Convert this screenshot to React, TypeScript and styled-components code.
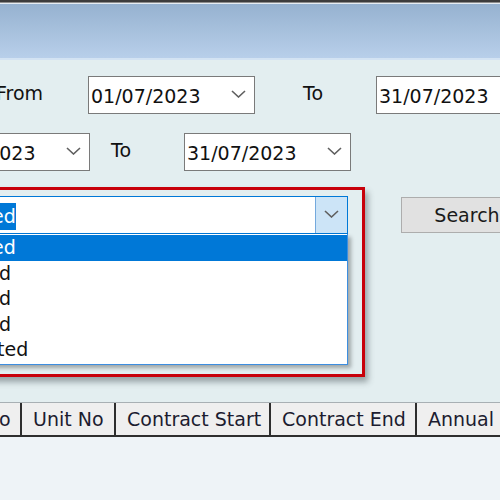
import { FC } from 'react';
import styled, { createGlobalStyle } from 'styled-components';

const GlobalStyle = createGlobalStyle`
  html, body {
    margin: 0;
    padding: 0;
    width: 500px;
    height: 500px;
    overflow: hidden;
    background: #e3eef0;
  }
  body {
    font-family: "DejaVu Sans", "Liberation Sans", sans-serif;
    font-size: 19px;
    color: #111;
  }
`;

const Window = styled.div`
  width: 500px;
  height: 500px;
  overflow: hidden;
  display: flex;
  flex-direction: column;
`;

const TitleBar = styled.div`
  height: 60px;
  flex: none;
  background: linear-gradient(
    #3c3c3c 0 2px,
    #8e8e8e 2px 3px,
    #e6edf3 3px 4px,
    #96b2d0 4px,
    #b8cfea 58px,
    #d3e3f3 58px 60px
  );
`;

const Form = styled.div`
  padding-top: 16px;
  display: flex;
  flex-direction: column;
`;

const Row = styled.div<{ $top?: number }>`
  display: flex;
  align-items: flex-start;
  height: 38px;
  margin-top: ${p => p.$top ?? 0}px;
  white-space: nowrap;
`;

const Label = styled.div<{ $width: number; $gap?: number }>`
  width: ${p => p.$width}px;
  margin-left: ${p => p.$gap ?? 0}px;
  padding-top: 6px;
  line-height: 22px;
  flex: none;
`;

const Combo = styled.div<{ $width: number; $left?: number; $focused?: boolean }>`
  width: ${p => p.$width}px;
  height: 38px;
  margin-left: ${p => p.$left ?? 0}px;
  box-sizing: border-box;
  border: 1px solid ${p => (p.$focused ? '#0078d7' : '#7a7a7a')};
  background: #fff;
  display: flex;
  align-items: center;
  flex: none;
`;

const ComboText = styled.div<{ $indent?: number }>`
  flex: 1;
  padding-left: ${p => p.$indent ?? 2}px;
  padding-top: 2px;
  line-height: 22px;
  overflow: hidden;
`;

const Selected = styled.span`
  background: #0078d7;
  color: #fff;
  display: inline-block;
  line-height: 27px;
`;

const ChevronBox = styled.div<{ $active?: boolean }>`
  width: 32px;
  height: 100%;
  display: flex;
  align-items: center;
  justify-content: center;
  box-sizing: border-box;
  background: ${p => (p.$active ? '#cce4f7' : 'transparent')};
  border-left: ${p => (p.$active ? '1px solid #74a9dd' : 'none')};
  padding-bottom: 3px;
`;

const Chevron: FC = () => (
  <svg width="15" height="8" viewBox="0 0 15 8">
    <polyline points="1,1 7.5,7 14,1" fill="none" stroke="#5f5f5f" strokeWidth="1.6" />
  </svg>
);

const SearchRow = styled.div`
  display: flex;
  align-items: flex-start;
  margin-top: 16px;
`;

const Highlight = styled.div`
  margin-left: -30px;
  width: 395px;
  height: 190px;
  box-sizing: border-box;
  border: 3px solid #c8000a;
  padding: 6px 14px 0 0;
  box-shadow: 3px 5px 6px rgba(60, 70, 75, 0.45);
  flex: none;
`;

const List = styled.div`
  height: 131px;
  box-sizing: border-box;
  border: 1px solid #3d8ee0;
  border-top: none;
  padding-top: 1px;
  background: #fff;
  box-shadow: 3px 3px 4px rgba(0, 0, 0, 0.3);
`;

const Item = styled.div<{ $indent: number; $active?: boolean }>`
  height: 25.6px;
  line-height: 25.6px;
  padding-left: ${p => p.$indent}px;
  background: ${p => (p.$active ? '#0078d7' : 'transparent')};
  color: ${p => (p.$active ? '#fff' : '#111')};
`;

const SearchButton = styled.button`
  margin: 10px 0 0 36px;
  width: 132px;
  height: 36px;
  flex: none;
  border: 1px solid #adadad;
  background: #e1e1e1;
  font: inherit;
  color: #1a1a1a;
  padding: 0;
`;

const Grid = styled.div`
  margin-top: 25px;
  flex: 1;
  background: #eef3f7;
  display: flex;
  flex-direction: column;
`;

const HeaderRow = styled.div`
  display: flex;
  height: 35px;
  box-sizing: border-box;
  border-top: 1px solid #a8b0b4;
  border-bottom: 2px solid #2e2e2e;
  background: #efefef;
  white-space: nowrap;
  color: #1c1c30;
  overflow: hidden;
`;

const HeaderCell = styled.div<{ $width?: number; $left?: number }>`
  width: ${p => (p.$width ? `${p.$width}px` : 'auto')};
  margin-left: ${p => p.$left ?? 0}px;
  flex-shrink: 0;
  box-sizing: border-box;
  padding-left: 11px;
  border-right: ${p => (p.$width ? '2px solid #2e2e2e' : 'none')};
  line-height: 32px;
  overflow: hidden;
`;

const App: FC = () => {
  return (
    <Window>
      <GlobalStyle />
      <TitleBar />
      <Form>
        <Row>
          <Label $width={92} $gap={-4}>From</Label>
          <Combo $width={167}>
            <ComboText>01/07/2023</ComboText>
            <ChevronBox><Chevron /></ChevronBox>
          </Combo>
          <Label $width={73} $gap={48}>To</Label>
          <Combo $width={167}>
            <ComboText>31/07/2023</ComboText>
            <ChevronBox><Chevron /></ChevronBox>
          </Combo>
        </Row>
        <Row $top={19}>
          <Combo $width={167} $left={-77}>
            <ComboText>01/07/2023</ComboText>
            <ChevronBox><Chevron /></ChevronBox>
          </Combo>
          <Label $width={73} $gap={21}>To</Label>
          <Combo $width={167}>
            <ComboText>31/07/2023</ComboText>
            <ChevronBox><Chevron /></ChevronBox>
          </Combo>
        </Row>
        <SearchRow>
          <Highlight>
            <Combo $width={375} $focused>
              <ComboText $indent={18}><Selected>ed</Selected></ComboText>
              <ChevronBox $active><Chevron /></ChevronBox>
            </Combo>
            <List>
              <Item $indent={18} $active>ed</Item>
              <Item $indent={25}>d</Item>
              <Item $indent={25}>d</Item>
              <Item $indent={25}>d</Item>
              <Item $indent={23}>ted</Item>
            </List>
          </Highlight>
          <SearchButton type="button">Search</SearchButton>
        </SearchRow>
      </Form>
      <Grid>
        <HeaderRow>
          <HeaderCell $width={34} $left={-12}>o</HeaderCell>
          <HeaderCell $width={94}>Unit No</HeaderCell>
          <HeaderCell $width={155}>Contract Start</HeaderCell>
          <HeaderCell $width={146}>Contract End</HeaderCell>
          <HeaderCell>Annual Rent</HeaderCell>
        </HeaderRow>
      </Grid>
    </Window>
  );
};

export default App;
